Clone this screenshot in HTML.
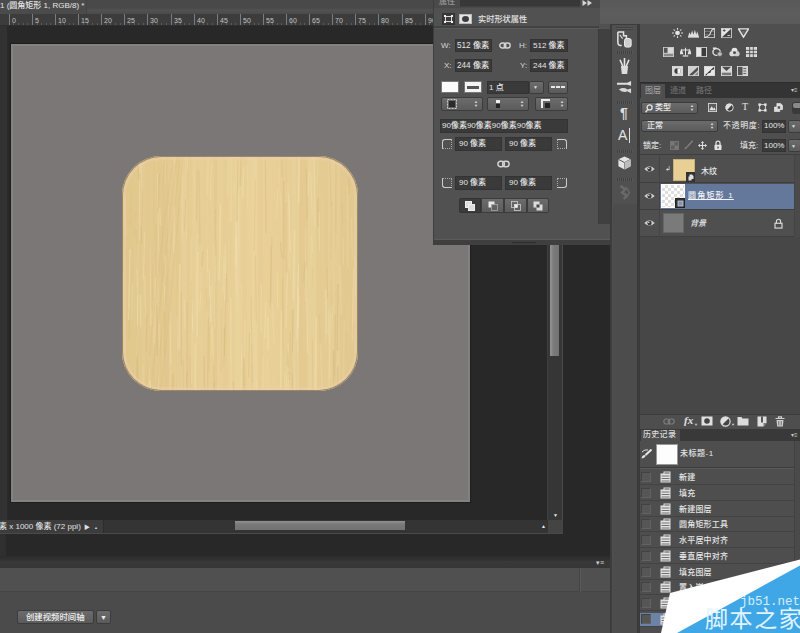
<!DOCTYPE html>
<html lang="zh-CN">
<head>
<meta charset="utf-8">
<title>Photoshop - 圆角矩形</title>
<style>
html,body{margin:0;padding:0;}
body{width:800px;height:633px;overflow:hidden;background:#282828;position:relative;
  font-family:"Liberation Sans","Noto Sans CJK SC",sans-serif;font-size:9px;color:#dcdcdc;line-height:1;font-weight:500;}
.a{position:absolute;box-sizing:border-box;}
.t{position:absolute;white-space:nowrap;}
/* ---------- document window ---------- */
#titlebar{left:0;top:0;width:800px;height:14px;background:linear-gradient(#494949 55%,#515151 75%,#4b4b4b);}
#doctab{left:0;top:0;width:87px;height:14px;background:#4b4b4b;border-right:1px solid #424242;}
#ruler{left:0;top:14px;width:433px;height:12px;background:#3c3c3c;border-bottom:1px solid #2e2e2e;}
#vruler{left:0;top:26px;width:7px;height:494px;background:#323232;}
#canvas{left:11px;top:44px;width:459px;height:458px;background:#7b7777;box-shadow:0 0 0 1px #1e1e1e;border:2px solid #848181;}
#wood{left:122px;top:156px;width:236px;height:235px;border-radius:39px;overflow:hidden;background:#e6cd94;}
#woodedge{left:122px;top:156px;width:236px;height:235px;border-radius:39px;box-shadow:inset 0 0 0 1px rgba(105,88,60,.6),inset 0 0 0 4px rgba(238,208,180,.4);}
#vscroll{left:547px;top:25px;width:16px;height:495px;background:#363636;border-left:1px solid #3e3e3e;border-right:1px solid #4a4a4a;}
#vthumb{left:550px;top:25px;width:9px;height:331px;background:linear-gradient(90deg,#959595,#7a7a7a 40%,#747474);}
#status{left:0;top:520px;width:563px;height:14px;background:#3c3c3c;border-bottom:1px solid #4a4a4a;}
#hthumb{left:235px;top:521px;width:170px;height:9px;background:linear-gradient(#909090,#787878 40%,#727272);}
/* ---------- timeline ---------- */
#tlhead{left:0;top:556px;width:610px;height:12px;background:linear-gradient(#2c2c2c,#323232 35%,#383838 45%,#363636);}
#tl{left:0;top:568px;width:610px;height:65px;background:#4b4b4b;}
#tltop{left:0;top:568px;width:610px;height:24px;background:#505050;border-bottom:1px solid #454545;}
.btn{background:linear-gradient(#6c6c6c,#5b5b5b);border:1px solid #3c3c3c;border-radius:2px;}
/* ---------- right column ---------- */
#rtop{left:600px;top:0;width:200px;height:24px;background:linear-gradient(#595959,#5d5d5d 60%,#5a5a5a);z-index:3;}
#strip{left:610px;top:24px;width:30px;height:609px;background:#505050;border-left:2px solid #3c3c3c;border-right:3px solid #3a3a3a;border-top:1px solid #3c3c3c;}
#layers{left:640px;top:24px;width:160px;height:404px;background:#4f4f4f;}
#history{left:640px;top:428px;width:160px;height:205px;background:#4e4e4e;}
/* ---------- properties ---------- */
#props{left:433px;top:0;width:177px;height:245px;background:#515151;border-left:1px solid #3e3e3e;border-bottom:1px solid #333;}
.fld{background:#3a3a3a;border:1px solid #333;height:11px;}
</style>
</head>
<body>
<!-- document window -->
<div class="a" id="titlebar"></div>
<div class="a" id="doctab"></div>
<div class="t" style="left:0px;top:2px;font-size:8px;color:#e6e6e6;">1 (圆角矩形 1, RGB/8) *</div>
<div class="a" id="ruler"></div>
<div class="a" style="left:9px;top:14px;width:1px;height:11px;background:#7c7c7c;"></div>
<div class="t" style="left:12px;top:17px;font-size:7px;color:#c2c2c2;">0</div>
<div class="a" style="left:13px;top:23px;width:1px;height:2px;background:#5a5a5a;"></div>
<div class="a" style="left:18px;top:23px;width:1px;height:2px;background:#5a5a5a;"></div>
<div class="a" style="left:23px;top:23px;width:1px;height:2px;background:#5a5a5a;"></div>
<div class="a" style="left:27px;top:23px;width:1px;height:2px;background:#5a5a5a;"></div>
<div class="a" style="left:32px;top:14px;width:1px;height:11px;background:#7c7c7c;"></div>
<div class="t" style="left:35px;top:17px;font-size:7px;color:#c2c2c2;">5</div>
<div class="a" style="left:37px;top:23px;width:1px;height:2px;background:#5a5a5a;"></div>
<div class="a" style="left:41px;top:23px;width:1px;height:2px;background:#5a5a5a;"></div>
<div class="a" style="left:46px;top:23px;width:1px;height:2px;background:#5a5a5a;"></div>
<div class="a" style="left:50px;top:23px;width:1px;height:2px;background:#5a5a5a;"></div>
<div class="a" style="left:55px;top:14px;width:1px;height:11px;background:#7c7c7c;"></div>
<div class="t" style="left:58px;top:17px;font-size:7px;color:#c2c2c2;">10</div>
<div class="a" style="left:60px;top:23px;width:1px;height:2px;background:#5a5a5a;"></div>
<div class="a" style="left:64px;top:23px;width:1px;height:2px;background:#5a5a5a;"></div>
<div class="a" style="left:69px;top:23px;width:1px;height:2px;background:#5a5a5a;"></div>
<div class="a" style="left:73px;top:23px;width:1px;height:2px;background:#5a5a5a;"></div>
<div class="a" style="left:78px;top:14px;width:1px;height:11px;background:#7c7c7c;"></div>
<div class="t" style="left:81px;top:17px;font-size:7px;color:#c2c2c2;">15</div>
<div class="a" style="left:83px;top:23px;width:1px;height:2px;background:#5a5a5a;"></div>
<div class="a" style="left:87px;top:23px;width:1px;height:2px;background:#5a5a5a;"></div>
<div class="a" style="left:92px;top:23px;width:1px;height:2px;background:#5a5a5a;"></div>
<div class="a" style="left:97px;top:23px;width:1px;height:2px;background:#5a5a5a;"></div>
<div class="a" style="left:101px;top:14px;width:1px;height:11px;background:#7c7c7c;"></div>
<div class="t" style="left:104px;top:17px;font-size:7px;color:#c2c2c2;">20</div>
<div class="a" style="left:106px;top:23px;width:1px;height:2px;background:#5a5a5a;"></div>
<div class="a" style="left:110px;top:23px;width:1px;height:2px;background:#5a5a5a;"></div>
<div class="a" style="left:115px;top:23px;width:1px;height:2px;background:#5a5a5a;"></div>
<div class="a" style="left:120px;top:23px;width:1px;height:2px;background:#5a5a5a;"></div>
<div class="a" style="left:124px;top:14px;width:1px;height:11px;background:#7c7c7c;"></div>
<div class="t" style="left:127px;top:17px;font-size:7px;color:#c2c2c2;">25</div>
<div class="a" style="left:129px;top:23px;width:1px;height:2px;background:#5a5a5a;"></div>
<div class="a" style="left:134px;top:23px;width:1px;height:2px;background:#5a5a5a;"></div>
<div class="a" style="left:138px;top:23px;width:1px;height:2px;background:#5a5a5a;"></div>
<div class="a" style="left:143px;top:23px;width:1px;height:2px;background:#5a5a5a;"></div>
<div class="a" style="left:147px;top:14px;width:1px;height:11px;background:#7c7c7c;"></div>
<div class="t" style="left:150px;top:17px;font-size:7px;color:#c2c2c2;">30</div>
<div class="a" style="left:152px;top:23px;width:1px;height:2px;background:#5a5a5a;"></div>
<div class="a" style="left:157px;top:23px;width:1px;height:2px;background:#5a5a5a;"></div>
<div class="a" style="left:161px;top:23px;width:1px;height:2px;background:#5a5a5a;"></div>
<div class="a" style="left:166px;top:23px;width:1px;height:2px;background:#5a5a5a;"></div>
<div class="a" style="left:171px;top:14px;width:1px;height:11px;background:#7c7c7c;"></div>
<div class="t" style="left:174px;top:17px;font-size:7px;color:#c2c2c2;">35</div>
<div class="a" style="left:175px;top:23px;width:1px;height:2px;background:#5a5a5a;"></div>
<div class="a" style="left:180px;top:23px;width:1px;height:2px;background:#5a5a5a;"></div>
<div class="a" style="left:184px;top:23px;width:1px;height:2px;background:#5a5a5a;"></div>
<div class="a" style="left:189px;top:23px;width:1px;height:2px;background:#5a5a5a;"></div>
<div class="a" style="left:194px;top:14px;width:1px;height:11px;background:#7c7c7c;"></div>
<div class="t" style="left:197px;top:17px;font-size:7px;color:#c2c2c2;">40</div>
<div class="a" style="left:198px;top:23px;width:1px;height:2px;background:#5a5a5a;"></div>
<div class="a" style="left:203px;top:23px;width:1px;height:2px;background:#5a5a5a;"></div>
<div class="a" style="left:207px;top:23px;width:1px;height:2px;background:#5a5a5a;"></div>
<div class="a" style="left:212px;top:23px;width:1px;height:2px;background:#5a5a5a;"></div>
<div class="a" style="left:217px;top:14px;width:1px;height:11px;background:#7c7c7c;"></div>
<div class="t" style="left:220px;top:17px;font-size:7px;color:#c2c2c2;">45</div>
<div class="a" style="left:221px;top:23px;width:1px;height:2px;background:#5a5a5a;"></div>
<div class="a" style="left:226px;top:23px;width:1px;height:2px;background:#5a5a5a;"></div>
<div class="a" style="left:231px;top:23px;width:1px;height:2px;background:#5a5a5a;"></div>
<div class="a" style="left:235px;top:23px;width:1px;height:2px;background:#5a5a5a;"></div>
<div class="a" style="left:240px;top:14px;width:1px;height:11px;background:#7c7c7c;"></div>
<div class="t" style="left:243px;top:17px;font-size:7px;color:#c2c2c2;">50</div>
<div class="a" style="left:244px;top:23px;width:1px;height:2px;background:#5a5a5a;"></div>
<div class="a" style="left:249px;top:23px;width:1px;height:2px;background:#5a5a5a;"></div>
<div class="a" style="left:254px;top:23px;width:1px;height:2px;background:#5a5a5a;"></div>
<div class="a" style="left:258px;top:23px;width:1px;height:2px;background:#5a5a5a;"></div>
<div class="a" style="left:263px;top:14px;width:1px;height:11px;background:#7c7c7c;"></div>
<div class="t" style="left:266px;top:17px;font-size:7px;color:#c2c2c2;">55</div>
<div class="a" style="left:268px;top:23px;width:1px;height:2px;background:#5a5a5a;"></div>
<div class="a" style="left:272px;top:23px;width:1px;height:2px;background:#5a5a5a;"></div>
<div class="a" style="left:277px;top:23px;width:1px;height:2px;background:#5a5a5a;"></div>
<div class="a" style="left:281px;top:23px;width:1px;height:2px;background:#5a5a5a;"></div>
<div class="a" style="left:286px;top:14px;width:1px;height:11px;background:#7c7c7c;"></div>
<div class="t" style="left:289px;top:17px;font-size:7px;color:#c2c2c2;">60</div>
<div class="a" style="left:291px;top:23px;width:1px;height:2px;background:#5a5a5a;"></div>
<div class="a" style="left:295px;top:23px;width:1px;height:2px;background:#5a5a5a;"></div>
<div class="a" style="left:300px;top:23px;width:1px;height:2px;background:#5a5a5a;"></div>
<div class="a" style="left:304px;top:23px;width:1px;height:2px;background:#5a5a5a;"></div>
<div class="a" style="left:309px;top:14px;width:1px;height:11px;background:#7c7c7c;"></div>
<div class="t" style="left:312px;top:17px;font-size:7px;color:#c2c2c2;">65</div>
<div class="a" style="left:314px;top:23px;width:1px;height:2px;background:#5a5a5a;"></div>
<div class="a" style="left:318px;top:23px;width:1px;height:2px;background:#5a5a5a;"></div>
<div class="a" style="left:323px;top:23px;width:1px;height:2px;background:#5a5a5a;"></div>
<div class="a" style="left:328px;top:23px;width:1px;height:2px;background:#5a5a5a;"></div>
<div class="a" style="left:332px;top:14px;width:1px;height:11px;background:#7c7c7c;"></div>
<div class="t" style="left:335px;top:17px;font-size:7px;color:#c2c2c2;">70</div>
<div class="a" style="left:337px;top:23px;width:1px;height:2px;background:#5a5a5a;"></div>
<div class="a" style="left:341px;top:23px;width:1px;height:2px;background:#5a5a5a;"></div>
<div class="a" style="left:346px;top:23px;width:1px;height:2px;background:#5a5a5a;"></div>
<div class="a" style="left:351px;top:23px;width:1px;height:2px;background:#5a5a5a;"></div>
<div class="a" style="left:355px;top:14px;width:1px;height:11px;background:#7c7c7c;"></div>
<div class="t" style="left:358px;top:17px;font-size:7px;color:#c2c2c2;">75</div>
<div class="a" style="left:360px;top:23px;width:1px;height:2px;background:#5a5a5a;"></div>
<div class="a" style="left:365px;top:23px;width:1px;height:2px;background:#5a5a5a;"></div>
<div class="a" style="left:369px;top:23px;width:1px;height:2px;background:#5a5a5a;"></div>
<div class="a" style="left:374px;top:23px;width:1px;height:2px;background:#5a5a5a;"></div>
<div class="a" style="left:378px;top:14px;width:1px;height:11px;background:#7c7c7c;"></div>
<div class="t" style="left:381px;top:17px;font-size:7px;color:#c2c2c2;">80</div>
<div class="a" style="left:383px;top:23px;width:1px;height:2px;background:#5a5a5a;"></div>
<div class="a" style="left:388px;top:23px;width:1px;height:2px;background:#5a5a5a;"></div>
<div class="a" style="left:392px;top:23px;width:1px;height:2px;background:#5a5a5a;"></div>
<div class="a" style="left:397px;top:23px;width:1px;height:2px;background:#5a5a5a;"></div>
<div class="a" style="left:402px;top:14px;width:1px;height:11px;background:#7c7c7c;"></div>
<div class="t" style="left:405px;top:17px;font-size:7px;color:#c2c2c2;">85</div>
<div class="a" style="left:406px;top:23px;width:1px;height:2px;background:#5a5a5a;"></div>
<div class="a" style="left:411px;top:23px;width:1px;height:2px;background:#5a5a5a;"></div>
<div class="a" style="left:415px;top:23px;width:1px;height:2px;background:#5a5a5a;"></div>
<div class="a" style="left:420px;top:23px;width:1px;height:2px;background:#5a5a5a;"></div>
<div class="a" style="left:425px;top:14px;width:1px;height:11px;background:#7c7c7c;"></div>
<div class="t" style="left:428px;top:17px;font-size:7px;color:#c2c2c2;">90</div>
<div class="a" style="left:429px;top:23px;width:1px;height:2px;background:#5a5a5a;"></div>
<div class="a" id="vruler"></div>
<div class="a" id="canvas"></div>
<div class="a" id="wood"><svg class="a" style="left:0;top:0" width="237" height="235" viewBox="0 0 237 235"><defs><linearGradient id="wg" x1="0" x2="1" y1="0" y2="0"><stop offset="0" stop-color="#e0c78c"/><stop offset="0.3" stop-color="#e6cd94"/><stop offset="0.55" stop-color="#e9d199"/><stop offset="0.8" stop-color="#e5cc93"/><stop offset="1" stop-color="#e1c88e"/></linearGradient></defs><rect width="237" height="235" fill="url(#wg)"/><rect x="20" y="0" width="3" height="235" fill="#f4e3b6" fill-opacity="0.1"/><rect x="31" y="0" width="2" height="235" fill="#d9bd80" fill-opacity="0.15"/><rect x="36" y="0" width="4" height="235" fill="#d9bd80" fill-opacity="0.14"/><rect x="42" y="0" width="5" height="235" fill="#d9bd80" fill-opacity="0.13"/><rect x="54" y="0" width="4" height="235" fill="#d9bd80" fill-opacity="0.14"/><rect x="60" y="0" width="5" height="235" fill="#f4e3b6" fill-opacity="0.13"/><rect x="65" y="0" width="2" height="235" fill="#d9bd80" fill-opacity="0.14"/><rect x="70" y="0" width="5" height="235" fill="#f4e3b6" fill-opacity="0.1"/><rect x="77" y="0" width="4" height="235" fill="#f4e3b6" fill-opacity="0.08"/><rect x="84" y="0" width="2" height="235" fill="#f4e3b6" fill-opacity="0.09"/><rect x="92" y="0" width="3" height="235" fill="#d9bd80" fill-opacity="0.2"/><rect x="101" y="0" width="5" height="235" fill="#d9bd80" fill-opacity="0.08"/><rect x="108" y="0" width="2" height="235" fill="#f4e3b6" fill-opacity="0.2"/><rect x="113" y="0" width="5" height="235" fill="#f4e3b6" fill-opacity="0.12"/><rect x="120" y="0" width="5" height="235" fill="#d9bd80" fill-opacity="0.11"/><rect x="130" y="0" width="5" height="235" fill="#f4e3b6" fill-opacity="0.14"/><rect x="136" y="0" width="5" height="235" fill="#d9bd80" fill-opacity="0.12"/><rect x="160" y="0" width="2" height="235" fill="#d9bd80" fill-opacity="0.14"/><rect x="170" y="0" width="4" height="235" fill="#f4e3b6" fill-opacity="0.14"/><rect x="175" y="0" width="2" height="235" fill="#f4e3b6" fill-opacity="0.15"/><rect x="177" y="0" width="4" height="235" fill="#d9bd80" fill-opacity="0.17"/><rect x="181" y="0" width="4" height="235" fill="#d9bd80" fill-opacity="0.09"/><rect x="186" y="0" width="4" height="235" fill="#f4e3b6" fill-opacity="0.2"/><rect x="190" y="0" width="4" height="235" fill="#f4e3b6" fill-opacity="0.2"/><rect x="206" y="0" width="5" height="235" fill="#f4e3b6" fill-opacity="0.12"/><rect x="211" y="0" width="2" height="235" fill="#f4e3b6" fill-opacity="0.17"/><rect x="214" y="0" width="4" height="235" fill="#f4e3b6" fill-opacity="0.14"/><rect x="236" y="0" width="2" height="235" fill="#d9bd80" fill-opacity="0.2"/><path d="M172.6 75l-1.2 70" stroke="#f8e9c0" stroke-opacity="0.36" stroke-width="1.5"/><path d="M177.8 -13l-1.2 60" stroke="#f8e9c0" stroke-opacity="0.39" stroke-width="1.5"/><path d="M184.8 142l0.3 51" stroke="#f8e9c0" stroke-opacity="0.19" stroke-width="0.8"/><path d="M122.9 165l-0.3 41" stroke="#f8e9c0" stroke-opacity="0.21" stroke-width="1.5"/><path d="M59.4 135l0.2 75" stroke="#cfb071" stroke-opacity="0.25" stroke-width="1"/><path d="M75.0 13l-0.7 52" stroke="#cfb071" stroke-opacity="0.39" stroke-width="0.8"/><path d="M40.1 90l0.1 36" stroke="#cfb071" stroke-opacity="0.25" stroke-width="1"/><path d="M159.3 155l-0.7 78" stroke="#f8e9c0" stroke-opacity="0.36" stroke-width="1.5"/><path d="M144.0 146l-1.4 36" stroke="#f8e9c0" stroke-opacity="0.35" stroke-width="1"/><path d="M32.2 91l-1.4 17" stroke="#f8e9c0" stroke-opacity="0.19" stroke-width="1"/><path d="M149.1 89l-0.9 62" stroke="#cfb071" stroke-opacity="0.32" stroke-width="1"/><path d="M112.6 24l-0.8 16" stroke="#f8e9c0" stroke-opacity="0.16" stroke-width="1.5"/><path d="M184.5 112l1.2 86" stroke="#f8e9c0" stroke-opacity="0.35" stroke-width="1"/><path d="M20.7 208l1.2 69" stroke="#f8e9c0" stroke-opacity="0.2" stroke-width="1"/><path d="M1.6 115l-0.9 64" stroke="#f8e9c0" stroke-opacity="0.31" stroke-width="1"/><path d="M171.1 180l1.4 63" stroke="#f8e9c0" stroke-opacity="0.37" stroke-width="0.8"/><path d="M231.6 112l-1.5 74" stroke="#f8e9c0" stroke-opacity="0.33" stroke-width="1"/><path d="M119.6 -11l-1.4 41" stroke="#cfb071" stroke-opacity="0.27" stroke-width="1.5"/><path d="M191.8 -4l1.2 75" stroke="#f8e9c0" stroke-opacity="0.32" stroke-width="1"/><path d="M111.5 225l1.3 83" stroke="#cfb071" stroke-opacity="0.27" stroke-width="1.5"/><path d="M20.4 34l-1.0 54" stroke="#cfb071" stroke-opacity="0.29" stroke-width="1"/><path d="M121.9 202l0.3 34" stroke="#cfb071" stroke-opacity="0.37" stroke-width="1.5"/><path d="M72.2 15l0.1 56" stroke="#f8e9c0" stroke-opacity="0.2" stroke-width="1"/><path d="M119.3 128l0.9 17" stroke="#f8e9c0" stroke-opacity="0.25" stroke-width="0.8"/><path d="M133.4 100l1.3 67" stroke="#cfb071" stroke-opacity="0.26" stroke-width="0.8"/><path d="M189.7 79l0.9 33" stroke="#f8e9c0" stroke-opacity="0.26" stroke-width="1.5"/><path d="M213.4 97l-0.7 39" stroke="#f8e9c0" stroke-opacity="0.16" stroke-width="1"/><path d="M166.4 219l-0.5 18" stroke="#f8e9c0" stroke-opacity="0.32" stroke-width="1"/><path d="M84.2 132l0.7 23" stroke="#cfb071" stroke-opacity="0.31" stroke-width="0.8"/><path d="M166.2 195l0.1 17" stroke="#cfb071" stroke-opacity="0.3" stroke-width="1.5"/><path d="M204.7 111l1.1 31" stroke="#cfb071" stroke-opacity="0.3" stroke-width="1"/><path d="M55.1 161l1.3 76" stroke="#f8e9c0" stroke-opacity="0.23" stroke-width="1"/><path d="M51.7 225l-1.2 82" stroke="#cfb071" stroke-opacity="0.18" stroke-width="1"/><path d="M91.9 87l0.9 86" stroke="#f8e9c0" stroke-opacity="0.31" stroke-width="1"/><path d="M22.8 120l0.8 42" stroke="#f8e9c0" stroke-opacity="0.28" stroke-width="1"/><path d="M119.2 148l0.8 29" stroke="#f8e9c0" stroke-opacity="0.16" stroke-width="0.8"/><path d="M145.4 202l1.0 51" stroke="#f8e9c0" stroke-opacity="0.2" stroke-width="1"/><path d="M234.7 207l-1.3 22" stroke="#f8e9c0" stroke-opacity="0.32" stroke-width="0.8"/><path d="M22.9 76l-1.5 47" stroke="#f8e9c0" stroke-opacity="0.3" stroke-width="1"/><path d="M166.1 187l1.3 29" stroke="#f8e9c0" stroke-opacity="0.24" stroke-width="1.5"/><path d="M143.4 3l0.6 74" stroke="#cfb071" stroke-opacity="0.35" stroke-width="1"/><path d="M204.0 134l0.9 45" stroke="#f8e9c0" stroke-opacity="0.4" stroke-width="1"/><path d="M61.2 203l1.2 71" stroke="#cfb071" stroke-opacity="0.25" stroke-width="1"/><path d="M208.5 150l-1.3 73" stroke="#f8e9c0" stroke-opacity="0.33" stroke-width="1"/><path d="M81.0 95l-1.4 16" stroke="#cfb071" stroke-opacity="0.38" stroke-width="1"/><path d="M64.7 216l0.1 37" stroke="#cfb071" stroke-opacity="0.29" stroke-width="1"/><path d="M92.3 225l-1.4 63" stroke="#cfb071" stroke-opacity="0.4" stroke-width="0.8"/><path d="M145.8 161l0.4 34" stroke="#f8e9c0" stroke-opacity="0.34" stroke-width="1.5"/><path d="M2.6 43l1.4 36" stroke="#f8e9c0" stroke-opacity="0.28" stroke-width="1"/><path d="M134.6 224l1.4 63" stroke="#f8e9c0" stroke-opacity="0.32" stroke-width="0.8"/><path d="M91.6 210l0.3 44" stroke="#cfb071" stroke-opacity="0.29" stroke-width="1"/><path d="M101.8 101l-0.6 36" stroke="#f8e9c0" stroke-opacity="0.24" stroke-width="1.5"/><path d="M155.3 117l0.3 36" stroke="#f8e9c0" stroke-opacity="0.34" stroke-width="1"/><path d="M150.0 80l-1.3 66" stroke="#cfb071" stroke-opacity="0.34" stroke-width="0.8"/><path d="M234.3 211l1.4 21" stroke="#f8e9c0" stroke-opacity="0.27" stroke-width="1"/><path d="M57.8 108l-0.8 85" stroke="#f8e9c0" stroke-opacity="0.39" stroke-width="1.5"/><path d="M167.4 -8l0.1 46" stroke="#f8e9c0" stroke-opacity="0.16" stroke-width="0.8"/><path d="M29.5 89l0.5 65" stroke="#cfb071" stroke-opacity="0.31" stroke-width="1.5"/><path d="M86.3 162l-0.8 76" stroke="#cfb071" stroke-opacity="0.33" stroke-width="1"/><path d="M27.0 199l0.7 74" stroke="#f8e9c0" stroke-opacity="0.3" stroke-width="1"/><path d="M165.7 27l1.4 36" stroke="#f8e9c0" stroke-opacity="0.21" stroke-width="1"/><path d="M217.0 195l-1.4 18" stroke="#f8e9c0" stroke-opacity="0.21" stroke-width="0.8"/><path d="M9.0 35l-0.8 36" stroke="#cfb071" stroke-opacity="0.19" stroke-width="0.8"/><path d="M232.6 99l1.0 42" stroke="#f8e9c0" stroke-opacity="0.34" stroke-width="1"/><path d="M17.6 9l-0.3 76" stroke="#f8e9c0" stroke-opacity="0.34" stroke-width="1"/><path d="M35.7 18l1.0 78" stroke="#f8e9c0" stroke-opacity="0.34" stroke-width="1"/><path d="M43.6 140l-1.3 59" stroke="#cfb071" stroke-opacity="0.17" stroke-width="1.5"/><path d="M133.7 99l-0.6 66" stroke="#cfb071" stroke-opacity="0.15" stroke-width="1"/><path d="M215.8 128l-0.7 67" stroke="#cfb071" stroke-opacity="0.32" stroke-width="1.5"/><path d="M33.9 68l-0.2 69" stroke="#cfb071" stroke-opacity="0.23" stroke-width="1"/><path d="M141.0 201l-0.6 67" stroke="#f8e9c0" stroke-opacity="0.35" stroke-width="1"/><path d="M75.3 78l-1.4 85" stroke="#f8e9c0" stroke-opacity="0.36" stroke-width="1"/><path d="M160.5 123l1.0 75" stroke="#cfb071" stroke-opacity="0.29" stroke-width="1"/><path d="M133.4 23l-1.3 72" stroke="#cfb071" stroke-opacity="0.21" stroke-width="1"/><path d="M37.6 52l0.9 17" stroke="#f8e9c0" stroke-opacity="0.29" stroke-width="1.5"/><path d="M19.9 0l-1.1 70" stroke="#f8e9c0" stroke-opacity="0.31" stroke-width="1"/><path d="M176.8 139l-0.5 33" stroke="#f8e9c0" stroke-opacity="0.38" stroke-width="1"/><path d="M108.8 66l0.1 76" stroke="#cfb071" stroke-opacity="0.27" stroke-width="1"/><path d="M170.9 153l-0.5 84" stroke="#cfb071" stroke-opacity="0.4" stroke-width="1.5"/><path d="M0.9 73l0.1 22" stroke="#cfb071" stroke-opacity="0.31" stroke-width="1.5"/><path d="M168.3 177l-1.0 47" stroke="#cfb071" stroke-opacity="0.21" stroke-width="1.5"/><path d="M150.5 148l1.4 39" stroke="#f8e9c0" stroke-opacity="0.22" stroke-width="1.5"/><path d="M14.0 56l-1.3 24" stroke="#cfb071" stroke-opacity="0.19" stroke-width="1"/><path d="M108.7 123l-0.4 83" stroke="#f8e9c0" stroke-opacity="0.2" stroke-width="0.8"/><path d="M139.4 127l-0.3 50" stroke="#f8e9c0" stroke-opacity="0.37" stroke-width="1"/><path d="M215.8 210l-0.3 62" stroke="#cfb071" stroke-opacity="0.27" stroke-width="1.5"/><path d="M226.5 142l-1.4 73" stroke="#f8e9c0" stroke-opacity="0.21" stroke-width="0.8"/><path d="M224.6 176l1.3 44" stroke="#cfb071" stroke-opacity="0.16" stroke-width="1"/><path d="M211.5 194l0.3 83" stroke="#cfb071" stroke-opacity="0.33" stroke-width="1.5"/><path d="M37.3 18l-1.1 39" stroke="#cfb071" stroke-opacity="0.35" stroke-width="1"/><path d="M175.8 132l-1.5 54" stroke="#f8e9c0" stroke-opacity="0.34" stroke-width="0.8"/><path d="M194.7 187l0.1 77" stroke="#f8e9c0" stroke-opacity="0.3" stroke-width="0.8"/><path d="M210.8 150l-0.9 21" stroke="#f8e9c0" stroke-opacity="0.2" stroke-width="1"/><path d="M161.7 171l-1.0 48" stroke="#f8e9c0" stroke-opacity="0.28" stroke-width="0.8"/><path d="M197.2 56l0.5 38" stroke="#f8e9c0" stroke-opacity="0.4" stroke-width="0.8"/><path d="M15.9 -2l0.9 26" stroke="#cfb071" stroke-opacity="0.34" stroke-width="1.5"/><path d="M28.9 89l-0.1 80" stroke="#f8e9c0" stroke-opacity="0.29" stroke-width="1.5"/><path d="M2.5 223l0.4 75" stroke="#cfb071" stroke-opacity="0.19" stroke-width="1"/><path d="M222.2 164l-0.9 87" stroke="#f8e9c0" stroke-opacity="0.17" stroke-width="1.5"/><path d="M89.2 7l-0.5 38" stroke="#f8e9c0" stroke-opacity="0.33" stroke-width="1"/><path d="M196.0 3l-1.0 26" stroke="#f8e9c0" stroke-opacity="0.31" stroke-width="0.8"/><path d="M45.8 -11l1.5 50" stroke="#f8e9c0" stroke-opacity="0.16" stroke-width="0.8"/><path d="M102.8 169l-0.9 41" stroke="#cfb071" stroke-opacity="0.18" stroke-width="1.5"/><path d="M35.1 149l0.3 51" stroke="#cfb071" stroke-opacity="0.33" stroke-width="1.5"/><path d="M75.3 173l-0.6 33" stroke="#f8e9c0" stroke-opacity="0.2" stroke-width="0.8"/><path d="M104.6 117l0.3 30" stroke="#cfb071" stroke-opacity="0.36" stroke-width="1"/><path d="M37.5 168l-1.1 83" stroke="#f8e9c0" stroke-opacity="0.28" stroke-width="1"/><path d="M169.1 222l0.5 54" stroke="#f8e9c0" stroke-opacity="0.16" stroke-width="1"/><path d="M184.1 13l1.3 51" stroke="#cfb071" stroke-opacity="0.23" stroke-width="1.5"/><path d="M85.6 93l0.1 24" stroke="#f8e9c0" stroke-opacity="0.29" stroke-width="1"/><path d="M15.1 204l1.0 28" stroke="#cfb071" stroke-opacity="0.18" stroke-width="1"/><path d="M68.4 200l0.1 33" stroke="#cfb071" stroke-opacity="0.2" stroke-width="1"/><path d="M18.1 -12l0.7 29" stroke="#f8e9c0" stroke-opacity="0.32" stroke-width="1"/><path d="M90.4 125l-1.4 75" stroke="#f8e9c0" stroke-opacity="0.25" stroke-width="0.8"/><path d="M125.1 9l0.2 45" stroke="#f8e9c0" stroke-opacity="0.22" stroke-width="1"/><path d="M78.7 137l-1.2 18" stroke="#f8e9c0" stroke-opacity="0.27" stroke-width="1"/><path d="M81.9 200l1.5 83" stroke="#cfb071" stroke-opacity="0.27" stroke-width="1.5"/><path d="M198.7 189l1.3 46" stroke="#f8e9c0" stroke-opacity="0.18" stroke-width="1.5"/><path d="M78.3 108l0.7 47" stroke="#f8e9c0" stroke-opacity="0.16" stroke-width="0.8"/><path d="M213.3 159l-0.8 60" stroke="#cfb071" stroke-opacity="0.37" stroke-width="1"/><path d="M200.1 39l1.2 80" stroke="#f8e9c0" stroke-opacity="0.18" stroke-width="0.8"/><path d="M129.2 141l1.1 86" stroke="#cfb071" stroke-opacity="0.33" stroke-width="0.8"/><path d="M87.4 114l0.2 57" stroke="#f8e9c0" stroke-opacity="0.34" stroke-width="1"/><path d="M214.1 4l-0.1 74" stroke="#cfb071" stroke-opacity="0.29" stroke-width="0.8"/><path d="M70.2 158l0.9 17" stroke="#f8e9c0" stroke-opacity="0.37" stroke-width="1"/><path d="M94.1 67l-0.6 59" stroke="#f8e9c0" stroke-opacity="0.26" stroke-width="0.8"/><path d="M76.9 15l1.1 73" stroke="#cfb071" stroke-opacity="0.2" stroke-width="1.5"/><path d="M164.1 -6l0.4 39" stroke="#cfb071" stroke-opacity="0.15" stroke-width="1"/><path d="M165.4 117l-1.3 55" stroke="#f8e9c0" stroke-opacity="0.37" stroke-width="1"/><path d="M25.1 158l-1.1 38" stroke="#cfb071" stroke-opacity="0.33" stroke-width="1"/><path d="M164.9 210l-1.1 48" stroke="#f8e9c0" stroke-opacity="0.37" stroke-width="0.8"/><path d="M163.8 46l0.5 69" stroke="#cfb071" stroke-opacity="0.24" stroke-width="1"/><path d="M209.6 125l-0.8 32" stroke="#cfb071" stroke-opacity="0.2" stroke-width="1"/><path d="M31.4 144l0.1 50" stroke="#f8e9c0" stroke-opacity="0.28" stroke-width="0.8"/><path d="M10.7 127l-1.0 36" stroke="#f8e9c0" stroke-opacity="0.29" stroke-width="1"/><path d="M234.2 26l1.5 28" stroke="#f8e9c0" stroke-opacity="0.37" stroke-width="0.8"/><path d="M8.0 93l-1.3 71" stroke="#f8e9c0" stroke-opacity="0.37" stroke-width="1.5"/><path d="M15.2 170l0.1 83" stroke="#cfb071" stroke-opacity="0.35" stroke-width="1"/><path d="M119.8 187l-1.2 66" stroke="#f8e9c0" stroke-opacity="0.34" stroke-width="1"/><path d="M103.2 144l-0.8 56" stroke="#cfb071" stroke-opacity="0.35" stroke-width="1"/><path d="M115.9 34l1.4 59" stroke="#f8e9c0" stroke-opacity="0.2" stroke-width="1.5"/><path d="M12.4 90l-0.0 81" stroke="#f8e9c0" stroke-opacity="0.15" stroke-width="1"/><path d="M103.0 88l0.2 35" stroke="#f8e9c0" stroke-opacity="0.38" stroke-width="0.8"/><path d="M128.7 174l0.6 33" stroke="#f8e9c0" stroke-opacity="0.26" stroke-width="1"/><path d="M194.3 161l-1.0 74" stroke="#f8e9c0" stroke-opacity="0.36" stroke-width="1.5"/><path d="M60.4 19l-0.4 67" stroke="#f8e9c0" stroke-opacity="0.25" stroke-width="1.5"/><path d="M51.3 218l-1.1 18" stroke="#cfb071" stroke-opacity="0.3" stroke-width="1.5"/><path d="M176.5 108l-1.1 89" stroke="#f8e9c0" stroke-opacity="0.37" stroke-width="0.8"/><path d="M93.1 53l0.7 47" stroke="#cfb071" stroke-opacity="0.32" stroke-width="0.8"/><path d="M231.3 130l-0.1 37" stroke="#f8e9c0" stroke-opacity="0.21" stroke-width="0.8"/><path d="M221.0 69l0.4 40" stroke="#f8e9c0" stroke-opacity="0.25" stroke-width="1"/><path d="M13.9 64l1.0 67" stroke="#f8e9c0" stroke-opacity="0.25" stroke-width="1"/><path d="M90.3 171l0.9 31" stroke="#f8e9c0" stroke-opacity="0.35" stroke-width="1"/><path d="M113.8 78l0.4 60" stroke="#f8e9c0" stroke-opacity="0.27" stroke-width="1"/><path d="M43.0 99l-0.4 56" stroke="#f8e9c0" stroke-opacity="0.32" stroke-width="1.5"/><path d="M65.1 -15l0.4 29" stroke="#f8e9c0" stroke-opacity="0.29" stroke-width="1"/><path d="M51.6 5l1.0 19" stroke="#f8e9c0" stroke-opacity="0.21" stroke-width="1"/><path d="M28.3 225l-0.5 78" stroke="#f8e9c0" stroke-opacity="0.37" stroke-width="1.5"/><path d="M182.7 107l-0.9 19" stroke="#cfb071" stroke-opacity="0.27" stroke-width="1.5"/><path d="M121.8 11l-1.1 31" stroke="#f8e9c0" stroke-opacity="0.29" stroke-width="1.5"/><path d="M167.5 44l-0.7 69" stroke="#f8e9c0" stroke-opacity="0.2" stroke-width="1.5"/><path d="M168.9 79l-0.5 44" stroke="#f8e9c0" stroke-opacity="0.22" stroke-width="1"/><path d="M51.1 -10l1.4 17" stroke="#f8e9c0" stroke-opacity="0.35" stroke-width="1.5"/><path d="M70.6 144l-1.1 84" stroke="#f8e9c0" stroke-opacity="0.24" stroke-width="1"/><path d="M183.6 72l-0.3 74" stroke="#f8e9c0" stroke-opacity="0.26" stroke-width="1"/><path d="M14.2 74l1.3 40" stroke="#cfb071" stroke-opacity="0.21" stroke-width="1.5"/><path d="M47.9 168l1.2 41" stroke="#f8e9c0" stroke-opacity="0.34" stroke-width="1"/><path d="M190.6 97l-0.3 34" stroke="#cfb071" stroke-opacity="0.16" stroke-width="1"/><path d="M86.3 -5l-0.6 45" stroke="#f8e9c0" stroke-opacity="0.36" stroke-width="0.8"/><path d="M170.4 197l0.2 20" stroke="#f8e9c0" stroke-opacity="0.37" stroke-width="0.8"/><path d="M62.1 144l1.2 29" stroke="#f8e9c0" stroke-opacity="0.24" stroke-width="1.5"/><path d="M7.4 153l-0.3 31" stroke="#cfb071" stroke-opacity="0.31" stroke-width="0.8"/><path d="M98.5 48l-1.4 77" stroke="#f8e9c0" stroke-opacity="0.38" stroke-width="1.5"/><path d="M32.2 104l0.3 38" stroke="#f8e9c0" stroke-opacity="0.16" stroke-width="1"/><path d="M63.9 43l-1.5 32" stroke="#cfb071" stroke-opacity="0.39" stroke-width="0.8"/><path d="M129.6 188l1.0 72" stroke="#cfb071" stroke-opacity="0.29" stroke-width="0.8"/><path d="M229.6 62l0.6 41" stroke="#f8e9c0" stroke-opacity="0.33" stroke-width="0.8"/><path d="M162.7 216l0.9 77" stroke="#f8e9c0" stroke-opacity="0.32" stroke-width="1"/><path d="M69.6 82l-0.5 43" stroke="#f8e9c0" stroke-opacity="0.21" stroke-width="1.5"/><path d="M42.1 106l1.2 24" stroke="#cfb071" stroke-opacity="0.35" stroke-width="0.8"/><path d="M73.5 188l-0.3 53" stroke="#f8e9c0" stroke-opacity="0.31" stroke-width="1.5"/><path d="M114.2 64l-0.4 45" stroke="#f8e9c0" stroke-opacity="0.31" stroke-width="1.5"/><path d="M161.8 25l0.2 79" stroke="#cfb071" stroke-opacity="0.36" stroke-width="1"/><path d="M99.7 153l-0.4 62" stroke="#cfb071" stroke-opacity="0.18" stroke-width="1"/><path d="M158.6 37l0.9 29" stroke="#f8e9c0" stroke-opacity="0.32" stroke-width="0.8"/><path d="M219.8 46l1.3 35" stroke="#cfb071" stroke-opacity="0.25" stroke-width="1"/><path d="M234.3 -8l-0.4 68" stroke="#cfb071" stroke-opacity="0.2" stroke-width="0.8"/><path d="M127.6 176l-1.0 45" stroke="#cfb071" stroke-opacity="0.36" stroke-width="0.8"/><path d="M16.0 88l-0.3 80" stroke="#f8e9c0" stroke-opacity="0.33" stroke-width="1"/><path d="M33.7 121l-1.1 66" stroke="#f8e9c0" stroke-opacity="0.35" stroke-width="1"/><path d="M41.5 6l-1.0 85" stroke="#cfb071" stroke-opacity="0.26" stroke-width="1"/><path d="M209.6 46l-0.8 58" stroke="#cfb071" stroke-opacity="0.22" stroke-width="1"/><path d="M114.3 70l0.8 34" stroke="#f8e9c0" stroke-opacity="0.15" stroke-width="0.8"/><path d="M158.9 -19l1.1 40" stroke="#cfb071" stroke-opacity="0.2" stroke-width="1"/><path d="M114.8 82l0.4 76" stroke="#f8e9c0" stroke-opacity="0.2" stroke-width="1.5"/><path d="M196.0 42l-0.2 29" stroke="#cfb071" stroke-opacity="0.4" stroke-width="1"/><path d="M197.6 158l0.5 28" stroke="#cfb071" stroke-opacity="0.28" stroke-width="0.8"/><path d="M64.2 -14l-0.9 57" stroke="#f8e9c0" stroke-opacity="0.15" stroke-width="0.8"/><path d="M227.3 -17l-0.3 55" stroke="#cfb071" stroke-opacity="0.33" stroke-width="1"/><path d="M190.3 183l1.0 73" stroke="#cfb071" stroke-opacity="0.27" stroke-width="0.8"/><path d="M96.8 200l-0.3 62" stroke="#f8e9c0" stroke-opacity="0.21" stroke-width="0.8"/><path d="M87.5 141l-0.6 76" stroke="#cfb071" stroke-opacity="0.26" stroke-width="1"/><path d="M15.8 140l-0.9 60" stroke="#f8e9c0" stroke-opacity="0.34" stroke-width="1"/><path d="M176.1 114l-0.4 66" stroke="#f8e9c0" stroke-opacity="0.19" stroke-width="1"/><path d="M43.2 -15l0.1 45" stroke="#f8e9c0" stroke-opacity="0.23" stroke-width="0.8"/><path d="M225.7 30l0.2 81" stroke="#f8e9c0" stroke-opacity="0.3" stroke-width="1"/><path d="M76.2 96l-1.0 85" stroke="#f8e9c0" stroke-opacity="0.33" stroke-width="1.5"/><path d="M64.8 146l0.1 86" stroke="#cfb071" stroke-opacity="0.34" stroke-width="1"/><path d="M2.4 159l1.2 65" stroke="#f8e9c0" stroke-opacity="0.3" stroke-width="0.8"/><path d="M203.0 134l0.7 53" stroke="#f8e9c0" stroke-opacity="0.33" stroke-width="0.8"/><path d="M103.4 94l-1.4 78" stroke="#f8e9c0" stroke-opacity="0.29" stroke-width="1"/><path d="M218.0 109l1.3 49" stroke="#f8e9c0" stroke-opacity="0.3" stroke-width="1"/><path d="M36.0 95l0.2 89" stroke="#f8e9c0" stroke-opacity="0.27" stroke-width="1"/><path d="M12.4 217l1.3 71" stroke="#f8e9c0" stroke-opacity="0.2" stroke-width="1.5"/><path d="M187.2 15l-1.3 24" stroke="#f8e9c0" stroke-opacity="0.4" stroke-width="0.8"/><path d="M206.2 154l1.1 34" stroke="#f8e9c0" stroke-opacity="0.28" stroke-width="1"/><path d="M46.4 49l0.8 63" stroke="#f8e9c0" stroke-opacity="0.26" stroke-width="0.8"/><path d="M207.8 -2l1.2 52" stroke="#cfb071" stroke-opacity="0.29" stroke-width="0.8"/><path d="M188.8 17l1.4 42" stroke="#f8e9c0" stroke-opacity="0.38" stroke-width="0.8"/><path d="M52.0 51l-0.1 46" stroke="#f8e9c0" stroke-opacity="0.32" stroke-width="1.5"/><path d="M115.9 2l-0.9 64" stroke="#cfb071" stroke-opacity="0.33" stroke-width="1"/><path d="M158.4 86l1.3 16" stroke="#cfb071" stroke-opacity="0.36" stroke-width="1"/><path d="M156.0 31l-1.4 31" stroke="#f8e9c0" stroke-opacity="0.3" stroke-width="1"/><path d="M65.9 43l-1.3 41" stroke="#f8e9c0" stroke-opacity="0.15" stroke-width="1"/><path d="M48.7 156l-0.7 80" stroke="#f8e9c0" stroke-opacity="0.17" stroke-width="1.5"/><path d="M88.8 130l-0.5 36" stroke="#f8e9c0" stroke-opacity="0.39" stroke-width="1"/><path d="M166.8 38l1.4 58" stroke="#f8e9c0" stroke-opacity="0.37" stroke-width="1"/><path d="M18.5 139l0.3 32" stroke="#f8e9c0" stroke-opacity="0.34" stroke-width="1.5"/><path d="M106.3 -4l-0.7 46" stroke="#f8e9c0" stroke-opacity="0.31" stroke-width="1"/><path d="M156.8 -17l1.2 61" stroke="#f8e9c0" stroke-opacity="0.18" stroke-width="0.8"/><path d="M24 235Q40 70 52 0" stroke="#d2b578" stroke-opacity="0.2" stroke-width="1.2" fill="none"/><path d="M29 235Q44 86 55 0" stroke="#d2b578" stroke-opacity="0.2" stroke-width="1.2" fill="none"/><path d="M34 235Q48 102 58 0" stroke="#d2b578" stroke-opacity="0.2" stroke-width="1.2" fill="none"/><path d="M39 235Q52 118 61 0" stroke="#d2b578" stroke-opacity="0.2" stroke-width="1.2" fill="none"/></svg></div>
<div class="a" id="woodedge"></div>
<div class="a" id="vscroll"></div>
<div class="a" id="vthumb"></div>
<div class="a" id="status"></div>
<div class="a" style="left:103px;top:520px;width:445px;height:13px;background:#343434;border-left:1px solid #2c2c2c;"></div>
<div class="a" style="left:0;top:534px;width:6px;height:22px;background:#2f2f2f;"></div>
<div class="a" id="hthumb"></div>
<div class="t" style="left:-1px;top:523px;font-size:8px;color:#e0e0e0;">素 x 1000 像素 (72 ppi)</div>
<div class="t" style="left:84px;top:524px;font-size:6px;color:#e0e0e0;">▶</div>
<div class="t" style="left:94px;top:526px;font-size:4px;color:#cfcfcf;">▲</div>
<!-- timeline -->
<div class="a" id="tlhead"></div>
<div class="a" id="tl"></div>
<div class="a" id="tltop"></div>
<div class="a" style="left:548px;top:520px;width:15px;height:13px;background:#444;"></div>
<div class="t" style="left:553px;top:513px;font-size:5px;color:#e8e8e8;">▼</div>
<div class="t" style="left:541px;top:524px;font-size:5px;color:#e8e8e8;">▲</div>
<div class="a" style="left:579px;top:568px;width:1px;height:24px;background:#444;border-right:1px solid #5a5a5a;box-sizing:content-box;"></div>
<div class="t" style="left:596px;top:559px;font-size:7px;color:#d0d0d0;">▾≡</div>
<div class="a btn" style="left:17px;top:610px;width:77px;height:14px;"></div>
<div class="t" style="left:26px;top:613px;font-size:8.4px;color:#f0f0f0;">创建视频时间轴</div>
<div class="a btn" style="left:96px;top:610px;width:15px;height:14px;"></div>
<div class="t" style="left:100px;top:614px;font-size:7px;color:#ececec;">▼</div>
<!-- right column -->
<div class="a" id="rtop"></div>
<div class="a" id="strip"></div>
<div class="a" id="layers"></div>
<div class="a" style="left:613px;top:204px;width:24px;height:429px;background:#4c4c4c;"></div>
<div class="a" style="left:617px;top:51px;width:16px;height:3px;background:repeating-linear-gradient(90deg,#3c3c3c 0 1px,#5a5a5a 1px 2px);opacity:.8"></div>
<div class="a" style="left:617px;top:101px;width:16px;height:3px;background:repeating-linear-gradient(90deg,#3c3c3c 0 1px,#5a5a5a 1px 2px);opacity:.8"></div>
<div class="a" style="left:617px;top:150px;width:16px;height:3px;background:repeating-linear-gradient(90deg,#3c3c3c 0 1px,#5a5a5a 1px 2px);opacity:.8"></div>
<div class="a" style="left:617px;top:178px;width:16px;height:3px;background:repeating-linear-gradient(90deg,#3c3c3c 0 1px,#5a5a5a 1px 2px);opacity:.8"></div>
<svg class="a" style="left:615px;top:30px" width="19" height="19" viewBox="0 0 18 20"><path d="M2 2H8V6H11V11" fill="none" stroke="#e2e2e2" stroke-width="1.6"/><path d="M2 2V13Q2 17 6 16" fill="none" stroke="#e2e2e2" stroke-width="1.6"/><rect x="9" y="9" width="7" height="9" rx="2" fill="#cfcfcf" stroke="#eee"/><path d="M4 5L7 9" stroke="#ddd" stroke-width="1.2"/></svg>
<svg class="a" style="left:617px;top:58px" width="15" height="17" viewBox="0 0 16 19"><path d="M3 2L6 9M8 0V9M13 2L10 9" stroke="#e4e4e4" stroke-width="1.8"/><path d="M4 9H12L11 18H5Z" fill="#dcdcdc"/></svg>
<svg class="a" style="left:616px;top:80px" width="17" height="15" viewBox="0 0 18 16"><path d="M1 3H12L16 1V6L12 5H1Z" fill="#e0e0e0"/><path d="M3 10Q8 7 12 10L16 9V14L12 12Q8 14 3 10Z" fill="#d8d8d8"/></svg>
<div class="t" style="left:620px;top:106px;font-size:14px;font-weight:bold;color:#dedede;">¶</div>
<div class="t" style="left:618px;top:128px;font-size:14px;color:#e4e4e4;">A</div>
<div class="a" style="left:629px;top:128px;width:1px;height:15px;background:#e0e0e0;"></div>
<svg class="a" style="left:618px;top:156px" width="13" height="14" viewBox="0 0 16 17"><path d="M8 0.5L15.5 4V12.5L8 16.5L0.5 12.5V4Z" fill="#e4e4e4"/><path d="M8 8L15.5 4M8 8L0.5 4M8 8V16.5" stroke="#555" stroke-width="1.2" fill="none"/><path d="M8 8L15.5 4V12.5L8 16.5Z" fill="#bdbdbd"/></svg>
<svg class="a" style="left:618px;top:185px" width="13" height="15" viewBox="0 0 16 18"><path d="M3 1L9 5L5 9L11 13L7 17" stroke="#6a6a6a" stroke-width="3" fill="none"/><path d="M10 2L14 9L10 16" stroke="#666" stroke-width="2" fill="none"/></svg>
<svg class="a" style="left:672px;top:28px" width="11" height="10" preserveAspectRatio="none" viewBox="0 0 12 12"><circle cx="6" cy="6" r="2.6" fill="#e6e6e6"/><path d="M6 0V2M6 10V12M0 6H2M10 6H12M1.8 1.8L3.2 3.2M8.8 8.8L10.2 10.2M1.8 10.2L3.2 8.8M8.8 3.2L10.2 1.8" stroke="#e6e6e6" stroke-width="1.2"/></svg>
<svg class="a" style="left:688px;top:28px" width="11" height="10" preserveAspectRatio="none" viewBox="0 0 12 12"><path d="M0.5 10.5H11.5V9L10 4L9 8L7.5 2L6 8L4.5 3L3 8L1.5 5L0.5 9Z" fill="#e0e0e0"/><rect x="0" y="10" width="12" height="1.5" fill="#eee"/></svg>
<svg class="a" style="left:704px;top:28px" width="11" height="10" preserveAspectRatio="none" viewBox="0 0 12 12"><rect x="0.5" y="0.5" width="11" height="11" fill="#4a4a4a" stroke="#cfcfcf"/><path d="M1 11Q6 10 7 6T11 1" stroke="#eee" fill="none" stroke-width="1.2"/><path d="M1 4H11M1 8H11" stroke="#aaa" stroke-width="0.6"/></svg>
<svg class="a" style="left:721px;top:28px" width="11" height="10" preserveAspectRatio="none" viewBox="0 0 12 12"><rect x="0.5" y="0.5" width="11" height="11" fill="#e4e4e4" stroke="#cfcfcf"/><path d="M11 1V11H1Z" fill="#444"/><path d="M2 3H5M3.5 1.5V4.5" stroke="#333" stroke-width="0.9"/><path d="M7 9H10" stroke="#eee" stroke-width="0.9"/></svg>
<svg class="a" style="left:738px;top:28px" width="11" height="10" preserveAspectRatio="none" viewBox="0 0 12 12"><path d="M0.5 1H11.5L6 11Z" fill="none" stroke="#e4e4e4" stroke-width="1.6"/><path d="M3.5 3.5H8.5L6 8Z" fill="#6a6a6a"/></svg>
<svg class="a" style="left:663px;top:47px" width="11" height="10" preserveAspectRatio="none" viewBox="0 0 12 12"><rect x="0.5" y="0.5" width="11" height="11" fill="#dadada" stroke="#cfcfcf"/><rect x="1" y="1" width="4" height="6" fill="#555"/><rect x="1" y="8" width="10" height="3" fill="#8a8a8a"/></svg>
<svg class="a" style="left:680px;top:47px" width="11" height="10" preserveAspectRatio="none" viewBox="0 0 12 12"><path d="M6 1V10M1.5 3.5H10.5M1.5 3.5L0 8H3ZM10.5 3.5L9 8H12Z" stroke="#e4e4e4" stroke-width="1.1" fill="#e4e4e4"/><rect x="3" y="10" width="6" height="1.5" fill="#e4e4e4"/></svg>
<svg class="a" style="left:696px;top:47px" width="11" height="10" preserveAspectRatio="none" viewBox="0 0 12 12"><rect x="0.5" y="0.5" width="11" height="11" fill="#3c3c3c" stroke="#d8d8d8"/><rect x="1" y="1" width="5" height="10" fill="#e8e8e8"/></svg>
<svg class="a" style="left:712px;top:47px" width="11" height="10" preserveAspectRatio="none" viewBox="0 0 12 12"><circle cx="5" cy="6" r="4" fill="none" stroke="#e0e0e0" stroke-width="1.6"/><circle cx="8.5" cy="8.5" r="2.8" fill="#bdbdbd" stroke="#555" stroke-width="0.8"/><rect x="1" y="0.5" width="4" height="2" fill="#e0e0e0"/></svg>
<svg class="a" style="left:729px;top:47px" width="11" height="10" preserveAspectRatio="none" viewBox="0 0 12 12"><circle cx="6" cy="4" r="3.2" fill="#e6e6e6"/><circle cx="3.6" cy="8" r="3.2" fill="#dcdcdc"/><circle cx="8.4" cy="8" r="3.2" fill="#d0d0d0"/><circle cx="6" cy="6.8" r="1.6" fill="#4a4a4a"/></svg>
<svg class="a" style="left:746px;top:47px" width="11" height="10" preserveAspectRatio="none" viewBox="0 0 12 12"><rect x="0.5" y="0.5" width="11" height="11" fill="#d8d8d8" stroke="#e6e6e6"/><path d="M0 4H12M0 8H12M4 0V12M8 0V12" stroke="#4a4a4a" stroke-width="1"/></svg>
<svg class="a" style="left:672px;top:66px" width="11" height="10" preserveAspectRatio="none" viewBox="0 0 12 12"><rect x="0.5" y="0.5" width="11" height="11" fill="#d8d8d8" stroke="#e0e0e0"/><circle cx="6" cy="6" r="3.4" fill="#3c3c3c"/><path d="M6 2.6A3.4 3.4 0 0 1 6 9.4Z" fill="#f4f4f4"/></svg>
<svg class="a" style="left:688px;top:66px" width="11" height="10" preserveAspectRatio="none" viewBox="0 0 12 12"><rect x="0.5" y="0.5" width="11" height="11" fill="#d0d0d0" stroke="#e0e0e0"/><path d="M1 11L11 1V5L5 11Z" fill="#505050"/><path d="M7 11L11 7V11Z" fill="#888"/></svg>
<svg class="a" style="left:704px;top:66px" width="11" height="10" preserveAspectRatio="none" viewBox="0 0 12 12"><rect x="0.5" y="0.5" width="11" height="11" fill="#e8e8e8" stroke="#e0e0e0"/><path d="M1 11L11 1V4L8 5L7 8L4 9L3 11Z" fill="#333"/></svg>
<svg class="a" style="left:721px;top:66px" width="11" height="10" preserveAspectRatio="none" viewBox="0 0 12 12"><rect x="0.5" y="0.5" width="11" height="11" fill="#d8d8d8" stroke="#e0e0e0"/><path d="M1 1L6 6L11 1Z" fill="#4a4a4a"/><rect x="1" y="8" width="10" height="3" fill="#777"/></svg>
<svg class="a" style="left:737px;top:66px" width="11" height="10" preserveAspectRatio="none" viewBox="0 0 12 12"><rect x="0.5" y="0.5" width="11" height="11" fill="#cfcfcf" stroke="#e0e0e0"/><rect x="1" y="1" width="5" height="10" fill="#555"/><path d="M7 3H10M7 6H10M7 9H10" stroke="#555" stroke-width="1"/></svg>
<div class="a" style="left:640px;top:82px;width:160px;height:16px;background:#343434;border-top:1px solid #2c2c2c;"></div>
<div class="a" style="left:641px;top:84px;width:24px;height:14px;background:#4f4f4f;"></div>
<div class="t" style="left:645px;top:87px;font-size:8px;color:#9c9c9c;">图层</div>
<div class="t" style="left:670px;top:87px;font-size:8px;color:#6c6c6c;">通道</div>
<div class="t" style="left:696px;top:87px;font-size:8px;color:#6c6c6c;">路径</div>
<div class="t" style="left:791px;top:87px;font-size:6px;color:#c8c8c8;">▾≡</div>
<div class="a btn" style="left:641px;top:102px;width:57px;height:12px;"></div>
<svg class="a" style="left:645px;top:104px" width="8" height="9" viewBox="0 0 8 9"><circle cx="4.6" cy="3.4" r="2.5" fill="none" stroke="#e6e6e6" stroke-width="1.3"/><path d="M2.8 5.4L0.6 8.2" stroke="#e6e6e6" stroke-width="1.4"/></svg>
<div class="t" style="left:655px;top:104px;font-size:8px;color:#e8e8e8;">类型</div>
<div class="t" style="left:690px;top:104px;font-size:4px;line-height:4px;color:#ddd;">▲<br>▼</div>
<svg class="a" style="left:708px;top:103px" width="9" height="9" viewBox="0 0 11 11"><rect x="0.5" y="0.5" width="10" height="10" fill="#5c5c5c" stroke="#e0e0e0"/><path d="M1.5 9L4.5 4L6.5 7L8 5.5L9.5 9Z" fill="#e0e0e0"/></svg>
<svg class="a" style="left:725px;top:103px" width="9" height="9" viewBox="0 0 11 11"><circle cx="5.5" cy="5.5" r="4.6" fill="#3c3c3c" stroke="#e0e0e0" stroke-width="1.2"/><path d="M5.5 0.9A4.6 4.6 0 0 0 2.2 8.8L8.8 2.2A4.6 4.6 0 0 0 5.5 0.9Z" fill="#e0e0e0"/></svg>
<div class="t" style="left:742px;top:102px;font-size:10px;font-family:'Liberation Serif',serif;color:#e6e6e6;">T</div>
<svg class="a" style="left:758px;top:103px" width="9" height="9" viewBox="0 0 11 11"><rect x="2" y="2" width="7" height="7" fill="none" stroke="#e0e0e0" stroke-width="1.1"/><rect x="0.5" y="0.5" width="3" height="3" fill="#e6e6e6"/><rect x="7.5" y="0.5" width="3" height="3" fill="#e6e6e6"/><rect x="0.5" y="7.5" width="3" height="3" fill="#e6e6e6"/><rect x="7.5" y="7.5" width="3" height="3" fill="#e6e6e6"/></svg>
<svg class="a" style="left:774px;top:103px" width="9" height="9" viewBox="0 0 11 11"><path d="M3.5 0.5H8L10.5 3V8H7V10.5H0.5V5H3.5Z" fill="#dcdcdc" stroke="#eee" stroke-width="0.8"/><rect x="4.5" y="4" width="3" height="3" fill="#555"/></svg>
<div class="a" style="left:792px;top:102px;width:8px;height:12px;background:#3a3a3a;border-radius:3px 0 0 3px;"></div>
<div class="a" style="left:793px;top:103px;width:7px;height:5px;background:#8a8a8a;border-radius:2px 0 0 2px;"></div>
<div class="a btn" style="left:641px;top:120px;width:77px;height:12px;"></div>
<div class="t" style="left:647px;top:122px;font-size:8px;color:#e8e8e8;">正常</div>
<div class="t" style="left:710px;top:122px;font-size:4px;line-height:4px;color:#ddd;">▲<br>▼</div>
<div class="t" style="left:723px;top:122px;font-size:8px;color:#dcdcdc;letter-spacing:0.6px;">不透明度:</div>
<div class="a fld" style="left:762px;top:120px;width:24px;height:13px;"></div>
<div class="t" style="left:764px;top:122px;font-size:8px;color:#e8e8e8;">100%</div>
<div class="a btn" style="left:788px;top:120px;width:13px;height:13px;"></div>
<div class="t" style="left:791px;top:124px;font-size:5px;color:#ddd;">▼</div>
<div class="t" style="left:643px;top:142px;font-size:8px;color:#dcdcdc;">锁定:</div>
<svg class="a" style="left:670px;top:141px" width="9" height="9" viewBox="0 0 9 9"><rect x="0.5" y="0.5" width="8" height="8" fill="#5e5e5e" stroke="#747474"/><rect x="1" y="1" width="3.5" height="3.5" fill="#787878"/><rect x="4.5" y="4.5" width="3.5" height="3.5" fill="#787878"/></svg>
<svg class="a" style="left:683px;top:140px" width="11" height="10" viewBox="0 0 12 12"><path d="M11 1L4.5 8" stroke="#808080" stroke-width="1.8"/><path d="M1 11Q1.5 7.5 4.5 8Q5 10.5 1 11Z" fill="#808080"/></svg>
<svg class="a" style="left:698px;top:141px" width="9" height="9" viewBox="0 0 11 11"><path d="M5.5 0L7.5 2.5H6.2V4.8H8.5V3.5L11 5.5L8.5 7.5V6.2H6.2V8.5H7.5L5.5 11L3.5 8.5H4.8V6.2H2.5V7.5L0 5.5L2.5 3.5V4.8H4.8V2.5H3.5Z" fill="#dedede"/></svg>
<svg class="a" style="left:714px;top:140px" width="8" height="10.5" viewBox="0 0 9 12"><path d="M2.2 6V3.6A2.3 2.3 0 0 1 6.8 3.6V6" fill="none" stroke="#e4e4e4" stroke-width="1.4"/><rect x="0.5" y="5.5" width="8" height="6" rx="0.8" fill="#e4e4e4"/><rect x="3.8" y="7.5" width="1.4" height="2.2" fill="#444"/></svg>
<div class="t" style="left:740px;top:142px;font-size:8px;color:#dcdcdc;">填充:</div>
<div class="a fld" style="left:762px;top:139px;width:24px;height:13px;"></div>
<div class="t" style="left:764px;top:142px;font-size:8px;color:#e8e8e8;">100%</div>
<div class="a btn" style="left:788px;top:139px;width:13px;height:13px;"></div>
<div class="t" style="left:791px;top:144px;font-size:5px;color:#ddd;">▼</div>
<div class="a" style="left:640px;top:154px;width:160px;height:1px;background:#3e3e3e;"></div>
<div class="a" style="left:640px;top:237px;width:160px;height:177px;background:#474747;"></div>
<div class="a" style="left:640px;top:155px;width:154px;height:28px;background:#4f4f4f;border-bottom:1px solid #3f3f3f;"></div>
<div class="a" style="left:640px;top:183px;width:154px;height:27px;background:#4f4f4f;border-bottom:1px solid #3f3f3f;"></div>
<div class="a" style="left:660px;top:184px;width:134px;height:25px;background:#64789c;"></div>
<div class="a" style="left:640px;top:210px;width:154px;height:27px;background:#4f4f4f;border-bottom:1px solid #3f3f3f;"></div>
<div class="a" style="left:659px;top:155px;width:1px;height:82px;background:#444;"></div>
<div class="a" style="left:794px;top:155px;width:6px;height:82px;background:#4a4a4a;border-left:1px solid #444;"></div>
<svg class="a" style="left:644px;top:165px" width="11" height="8" viewBox="0 0 11 8"><path d="M0.3 4Q5.5 -1.5 10.7 4Q5.5 9 0.3 4Z" fill="#d2d2d2"/><circle cx="5.5" cy="4" r="2.2" fill="#3a3a3a"/><circle cx="4.8" cy="3.2" r="0.8" fill="#e8e8e8"/></svg>
<svg class="a" style="left:644px;top:192px" width="11" height="8" viewBox="0 0 11 8"><path d="M0.3 4Q5.5 -1.5 10.7 4Q5.5 9 0.3 4Z" fill="#d2d2d2"/><circle cx="5.5" cy="4" r="2.2" fill="#3a3a3a"/><circle cx="4.8" cy="3.2" r="0.8" fill="#e8e8e8"/></svg>
<svg class="a" style="left:644px;top:219px" width="11" height="8" viewBox="0 0 11 8"><path d="M0.3 4Q5.5 -1.5 10.7 4Q5.5 9 0.3 4Z" fill="#d2d2d2"/><circle cx="5.5" cy="4" r="2.2" fill="#3a3a3a"/><circle cx="4.8" cy="3.2" r="0.8" fill="#e8e8e8"/></svg>
<div class="t" style="left:665px;top:165px;font-size:7px;color:#ddd;">↲</div>
<div class="a" style="left:673px;top:159px;width:22px;height:22px;background:#e8cf94;border:1px solid #c9b078;"></div>
<div class="a" style="left:686px;top:172px;width:9px;height:10px;background:#333;"></div>
<svg class="a" style="left:688px;top:174px" width="6" height="7" viewBox="0 0 6 7"><path d="M1.5 0.5H4L5.5 2V5H3.5V6.5H0.5V2.5H1.5Z" fill="#e0e0e0"/></svg>
<div class="t" style="left:701px;top:168px;font-size:8px;color:#e8e8e8;">木纹</div>
<div class="a" style="left:661px;top:184px;width:24px;height:24px;border:1px solid #fff;background-color:#fff;background-image:linear-gradient(45deg,#dedede 25%,transparent 25%,transparent 75%,#dedede 75%),linear-gradient(45deg,#dedede 25%,transparent 25%,transparent 75%,#dedede 75%);background-size:6px 6px;background-position:0 0,3px 3px;"></div>
<div class="a" style="left:675px;top:198px;width:10px;height:10px;background:#333;border:1px solid #222;"></div>
<svg class="a" style="left:677px;top:200px" width="7" height="7" viewBox="0 0 7 7"><rect x="1" y="1" width="5" height="5" fill="#7f93b5" stroke="#c8d2e4" stroke-width="0.8"/></svg>
<div class="t" style="left:688px;top:192px;font-size:8px;color:#f4f4f4;text-decoration:underline;letter-spacing:1.2px;">圆角矩形 1</div>
<div class="a" style="left:663px;top:213px;width:21px;height:20px;background:#7a7a7a;border:1px solid #666;"></div>
<div class="t" style="left:690px;top:220px;font-size:8px;font-style:italic;color:#e8e8e8;">背景</div>
<svg class="a" style="left:774px;top:218px" width="9" height="10.5" viewBox="0 0 10 12"><path d="M2.6 6V3.8A2.4 2.4 0 0 1 7.4 3.8V6" fill="none" stroke="#dedede" stroke-width="1.3"/><rect x="1" y="6" width="8" height="5.5" fill="none" stroke="#dedede" stroke-width="1.3"/></svg>
<div class="a" style="left:640px;top:414px;width:160px;height:15px;background:#4e4e4e;border-top:1px solid #3a3a3a;border-bottom:1px solid #383838;"></div>
<!-- layers toolbar icons -->
<svg class="a" style="left:663px;top:418px" width="12" height="7" viewBox="0 0 12 7"><rect x="0.8" y="1" width="6" height="5" rx="2.5" fill="none" stroke="#7c7c7c" stroke-width="1.2"/><rect x="5.2" y="1" width="6" height="5" rx="2.5" fill="none" stroke="#7c7c7c" stroke-width="1.2"/></svg>
<div class="t" style="left:684px;top:415px;font-size:11px;font-style:italic;font-weight:bold;font-family:'Liberation Serif',serif;color:#e2e2e2;">fx</div>
<div class="t" style="left:694px;top:423px;font-size:4px;color:#ccc;">▼</div>
<svg class="a" style="left:701px;top:416px" width="12" height="10" viewBox="0 0 12 10"><rect x="0.5" y="0.5" width="11" height="9" fill="#e0e0e0"/><circle cx="6" cy="5" r="2.8" fill="#444"/></svg>
<svg class="a" style="left:720px;top:416px" width="11" height="11" viewBox="0 0 11 11"><circle cx="5.5" cy="5.5" r="4.6" fill="#444" stroke="#e0e0e0" stroke-width="1.2"/><path d="M5.5 0.9A4.6 4.6 0 0 0 2.2 8.8L8.8 2.2A4.6 4.6 0 0 0 5.5 0.9Z" fill="#e0e0e0"/></svg>
<div class="t" style="left:731px;top:423px;font-size:4px;color:#ccc;">▼</div>
<svg class="a" style="left:737px;top:416px" width="12" height="10" viewBox="0 0 12 10"><path d="M0.5 1H4.5L5.5 2.5H11.5V9.5H0.5Z" fill="#dcdcdc"/></svg>
<svg class="a" style="left:757px;top:416px" width="10" height="11" viewBox="0 0 10 11"><path d="M0.5 0.5H9.5V7L6.5 10.5H0.5Z" fill="#dedede"/><path d="M9.5 7H6.5V10.5" fill="#777"/><rect x="4" y="0.5" width="2" height="6" fill="#555"/></svg>
<svg class="a" style="left:775px;top:416px" width="10" height="11" viewBox="0 0 10 11"><path d="M0.5 2.5H9.5M3.5 2V0.8H6.5V2" stroke="#cfcfcf" stroke-width="1.2" fill="none"/><path d="M1.5 4H8.5L7.8 10.5H2.2Z" fill="#cfcfcf"/><path d="M3.8 5V9.5M6.2 5V9.5" stroke="#555" stroke-width="0.8"/></svg>
<!-- history panel -->
<div class="a" id="history"></div>
<div class="a" style="left:640px;top:429px;width:160px;height:12px;background:#393939;"></div>
<div class="a" style="left:641px;top:430px;width:39px;height:11px;background:#4e4e4e;"></div>
<div class="t" style="left:643px;top:431px;font-size:8px;color:#dcdcdc;letter-spacing:0.3px;">历史记录</div>
<div class="t" style="left:791px;top:432px;font-size:6px;color:#c8c8c8;">▾≡</div>
<div class="a" style="left:794px;top:441px;width:6px;height:192px;background:#4a4a4a;border-left:1px solid #424242;"></div>
<svg class="a" style="left:641px;top:449px" width="11" height="10" viewBox="0 0 11 10"><path d="M10.5 0.5L4.5 6" stroke="#e6e6e6" stroke-width="2"/><path d="M0.5 9.5Q1 5.5 4.5 6Q5 8.5 0.5 9.5Z" fill="#e6e6e6"/><path d="M1 3Q4 0 7 1" stroke="#ddd" stroke-width="1" fill="none"/></svg>
<div class="a" style="left:656px;top:444px;width:22px;height:21px;background:#fdfdfd;border:1px solid #999;"></div>
<div class="t" style="left:680px;top:450px;font-size:8px;color:#e6e6e6;letter-spacing:0.5px;">未标题-1</div>
<div class="a" style="left:640px;top:467px;width:154px;height:2px;background:#3c3c3c;border-bottom:1px solid #5a5a5a;"></div>
<div class="a" style="left:640px;top:484px;width:154px;height:1px;background:#434343;"></div>
<div class="a" style="left:641px;top:472px;width:10px;height:10px;background:#565656;border:1px solid #626262;border-top-color:#424242;border-left-color:#424242;"></div>
<svg class="a" style="left:660px;top:471px" width="11" height="12" viewBox="0 0 11 12"><path d="M0.5 2.5H3.5V0.5H10.5V11.5H0.5Z" fill="#e2e2e2"/><path d="M1.5 5H9.5M1.5 7.5H9.5M1.5 10H9.5" stroke="#666" stroke-width="0.9"/><path d="M4.5 2H9.5" stroke="#555" stroke-width="1"/></svg>
<div class="t" style="left:679px;top:474px;font-size:8px;color:#e6e6e6;letter-spacing:0.2px;">新建</div>
<div class="a" style="left:640px;top:500px;width:154px;height:1px;background:#434343;"></div>
<div class="a" style="left:641px;top:488px;width:10px;height:10px;background:#565656;border:1px solid #626262;border-top-color:#424242;border-left-color:#424242;"></div>
<svg class="a" style="left:660px;top:487px" width="11" height="12" viewBox="0 0 11 12"><path d="M0.5 2.5H3.5V0.5H10.5V11.5H0.5Z" fill="#e2e2e2"/><path d="M1.5 5H9.5M1.5 7.5H9.5M1.5 10H9.5" stroke="#666" stroke-width="0.9"/><path d="M4.5 2H9.5" stroke="#555" stroke-width="1"/></svg>
<div class="t" style="left:679px;top:490px;font-size:8px;color:#e6e6e6;letter-spacing:0.2px;">填充</div>
<div class="a" style="left:640px;top:516px;width:154px;height:1px;background:#434343;"></div>
<div class="a" style="left:641px;top:504px;width:10px;height:10px;background:#565656;border:1px solid #626262;border-top-color:#424242;border-left-color:#424242;"></div>
<svg class="a" style="left:660px;top:503px" width="11" height="12" viewBox="0 0 11 12"><path d="M0.5 2.5H3.5V0.5H10.5V11.5H0.5Z" fill="#e2e2e2"/><path d="M1.5 5H9.5M1.5 7.5H9.5M1.5 10H9.5" stroke="#666" stroke-width="0.9"/><path d="M4.5 2H9.5" stroke="#555" stroke-width="1"/></svg>
<div class="t" style="left:679px;top:506px;font-size:8px;color:#e6e6e6;letter-spacing:0.2px;">新建图层</div>
<div class="a" style="left:640px;top:531px;width:154px;height:1px;background:#434343;"></div>
<div class="a" style="left:641px;top:519px;width:10px;height:10px;background:#565656;border:1px solid #626262;border-top-color:#424242;border-left-color:#424242;"></div>
<svg class="a" style="left:660px;top:518px" width="11" height="12" viewBox="0 0 11 12"><path d="M0.5 2.5H3.5V0.5H10.5V11.5H0.5Z" fill="#e2e2e2"/><path d="M1.5 5H9.5M1.5 7.5H9.5M1.5 10H9.5" stroke="#666" stroke-width="0.9"/><path d="M4.5 2H9.5" stroke="#555" stroke-width="1"/></svg>
<div class="t" style="left:679px;top:521px;font-size:8px;color:#e6e6e6;letter-spacing:0.2px;">圆角矩形工具</div>
<div class="a" style="left:640px;top:547px;width:154px;height:1px;background:#434343;"></div>
<div class="a" style="left:641px;top:535px;width:10px;height:10px;background:#565656;border:1px solid #626262;border-top-color:#424242;border-left-color:#424242;"></div>
<svg class="a" style="left:660px;top:534px" width="11" height="12" viewBox="0 0 11 12"><path d="M0.5 2.5H3.5V0.5H10.5V11.5H0.5Z" fill="#e2e2e2"/><path d="M1.5 5H9.5M1.5 7.5H9.5M1.5 10H9.5" stroke="#666" stroke-width="0.9"/><path d="M4.5 2H9.5" stroke="#555" stroke-width="1"/></svg>
<div class="t" style="left:679px;top:537px;font-size:8px;color:#e6e6e6;letter-spacing:0.2px;">水平居中对齐</div>
<div class="a" style="left:640px;top:563px;width:154px;height:1px;background:#434343;"></div>
<div class="a" style="left:641px;top:551px;width:10px;height:10px;background:#565656;border:1px solid #626262;border-top-color:#424242;border-left-color:#424242;"></div>
<svg class="a" style="left:660px;top:550px" width="11" height="12" viewBox="0 0 11 12"><path d="M0.5 2.5H3.5V0.5H10.5V11.5H0.5Z" fill="#e2e2e2"/><path d="M1.5 5H9.5M1.5 7.5H9.5M1.5 10H9.5" stroke="#666" stroke-width="0.9"/><path d="M4.5 2H9.5" stroke="#555" stroke-width="1"/></svg>
<div class="t" style="left:679px;top:553px;font-size:8px;color:#e6e6e6;letter-spacing:0.2px;">垂直居中对齐</div>
<div class="a" style="left:640px;top:579px;width:154px;height:1px;background:#434343;"></div>
<div class="a" style="left:641px;top:567px;width:10px;height:10px;background:#565656;border:1px solid #626262;border-top-color:#424242;border-left-color:#424242;"></div>
<svg class="a" style="left:660px;top:566px" width="11" height="12" viewBox="0 0 11 12"><path d="M0.5 2.5H3.5V0.5H10.5V11.5H0.5Z" fill="#e2e2e2"/><path d="M1.5 5H9.5M1.5 7.5H9.5M1.5 10H9.5" stroke="#666" stroke-width="0.9"/><path d="M4.5 2H9.5" stroke="#555" stroke-width="1"/></svg>
<div class="t" style="left:679px;top:569px;font-size:8px;color:#e6e6e6;letter-spacing:0.2px;">填充图层</div>
<div class="a" style="left:640px;top:594px;width:154px;height:1px;background:#434343;"></div>
<div class="a" style="left:641px;top:582px;width:10px;height:10px;background:#565656;border:1px solid #626262;border-top-color:#424242;border-left-color:#424242;"></div>
<svg class="a" style="left:660px;top:581px" width="11" height="12" viewBox="0 0 11 12"><path d="M0.5 2.5H3.5V0.5H10.5V11.5H0.5Z" fill="#e2e2e2"/><path d="M1.5 5H9.5M1.5 7.5H9.5M1.5 10H9.5" stroke="#666" stroke-width="0.9"/><path d="M4.5 2H9.5" stroke="#555" stroke-width="1"/></svg>
<div class="t" style="left:679px;top:584px;font-size:8px;color:#e6e6e6;letter-spacing:0.2px;">置入嵌入的智能对象</div>
<div class="a" style="left:640px;top:610px;width:154px;height:1px;background:#434343;"></div>
<div class="a" style="left:641px;top:598px;width:10px;height:10px;background:#565656;border:1px solid #626262;border-top-color:#424242;border-left-color:#424242;"></div>
<svg class="a" style="left:660px;top:597px" width="11" height="12" viewBox="0 0 11 12"><path d="M0.5 2.5H3.5V0.5H10.5V11.5H0.5Z" fill="#e2e2e2"/><path d="M1.5 5H9.5M1.5 7.5H9.5M1.5 10H9.5" stroke="#666" stroke-width="0.9"/><path d="M4.5 2H9.5" stroke="#555" stroke-width="1"/></svg>
<div class="t" style="left:679px;top:600px;font-size:8px;color:#e6e6e6;letter-spacing:0.2px;">栅格化图层</div>
<div class="a" style="left:640px;top:613px;width:154px;height:13px;background:#6c82a6;"></div>
<div class="a" style="left:640px;top:626px;width:154px;height:1px;background:#434343;"></div>
<div class="a" style="left:641px;top:614px;width:10px;height:10px;background:#565656;border:1px solid #626262;border-top-color:#424242;border-left-color:#424242;"></div>
<svg class="a" style="left:660px;top:613px" width="11" height="12" viewBox="0 0 11 12"><path d="M0.5 2.5H3.5V0.5H10.5V11.5H0.5Z" fill="#e2e2e2"/><path d="M1.5 5H9.5M1.5 7.5H9.5M1.5 10H9.5" stroke="#666" stroke-width="0.9"/><path d="M4.5 2H9.5" stroke="#555" stroke-width="1"/></svg>
<div class="t" style="left:679px;top:616px;font-size:8px;color:#e6e6e6;letter-spacing:0.2px;">创建剪贴蒙版</div>
<!-- watermark -->
<svg class="a" style="left:640px;top:540px" width="160" height="93" viewBox="640 540 160 93"><polygon points="800,559.5 670,593 661,633 800,633" fill="#ffffff"/><polygon points="800,565.5 677,633 800,633" fill="#3fa7e6"/></svg>
<div class="t" style="left:740px;top:596px;font-size:12.5px;font-family:'Liberation Mono',monospace;color:#d4eefc;">jb51.net</div>
<div class="t" style="left:705px;top:608px;font-size:23px;font-weight:400;letter-spacing:1.6px;color:#e2f4fe;">脚本之家</div>

<div class="a" style="left:616px;top:27px;width:17px;height:3px;background:repeating-linear-gradient(#3c3c3c 0 1px,#5a5a5a 1px 2px);opacity:.7"></div>
<!-- properties panel -->
<div class="a" id="props"></div>
<div class="a" style="left:434px;top:0;width:176px;height:8px;background:#4a4a4a;"></div>
<div class="a" style="left:460px;top:0;width:120px;height:7px;background:#383838;border-bottom:1px solid #404040;"></div>
<div class="t" style="left:439px;top:-2px;font-size:8px;color:#9a9a9a;">属性</div>
<svg class="a" style="left:582px;top:0" width="11" height="7" viewBox="0 0 11 7"><path d="M0.5 0L5 3L0.5 6ZM5.5 0L10 3L5.5 6Z" fill="#d4d4d4"/></svg>
<div class="a" style="left:598px;top:29px;width:12px;height:195px;background:#404040;border-left:1px solid #3c3c3c;"></div>
<!-- header row -->
<div class="a" style="left:442px;top:13px;width:13px;height:12px;background:#3a3a3a;border:1px solid #333;"></div>
<svg class="a" style="left:444px;top:15px" width="9" height="8" viewBox="0 0 9 8"><rect x="1.5" y="1.5" width="6" height="5" fill="none" stroke="#ddd" stroke-width="1"/><rect x="0" y="0" width="2" height="2" fill="#eee"/><rect x="7" y="0" width="2" height="2" fill="#eee"/><rect x="0" y="6" width="2" height="2" fill="#eee"/><rect x="7" y="6" width="2" height="2" fill="#eee"/></svg>
<div class="a" style="left:459px;top:14px;width:13px;height:10px;background:#e4e4e4;border:1px solid #bbb;"></div>
<div class="a" style="left:462px;top:16px;width:7px;height:6px;border-radius:50%;background:#3c3c3c;"></div>
<div class="t" style="left:478px;top:16px;font-size:8.2px;color:#e4e4e4;">实时形状属性</div>
<div class="a" style="left:434px;top:26px;width:165px;height:3px;background:#424242;border-bottom:1px solid #5a5a5a;"></div>
<!-- W/H -->
<div class="t" style="left:441px;top:42px;font-size:8px;color:#d8d8d8;">W:</div>
<div class="a fld" style="left:455px;top:39px;width:37px;height:13px;"></div>
<div class="t" style="left:457px;top:42px;font-size:8.2px;color:#e6e6e6;">512 像素</div>
<svg class="a" style="left:499px;top:42px" width="12" height="7" viewBox="0 0 12 7"><rect x="0.8" y="1" width="6" height="5" rx="2.5" fill="none" stroke="#d4d4d4" stroke-width="1.4"/><rect x="5.2" y="1" width="6" height="5" rx="2.5" fill="none" stroke="#d4d4d4" stroke-width="1.4"/></svg>
<div class="t" style="left:519px;top:42px;font-size:8px;color:#d8d8d8;">H:</div>
<div class="a fld" style="left:530px;top:39px;width:38px;height:13px;"></div>
<div class="t" style="left:533px;top:42px;font-size:8px;color:#e6e6e6;">512 像素</div>
<!-- X/Y -->
<div class="t" style="left:444px;top:62px;font-size:8px;color:#d8d8d8;">X:</div>
<div class="a fld" style="left:455px;top:59px;width:37px;height:13px;"></div>
<div class="t" style="left:457px;top:62px;font-size:8.2px;color:#e6e6e6;">244 像素</div>
<div class="t" style="left:520px;top:62px;font-size:8px;color:#d8d8d8;">Y:</div>
<div class="a fld" style="left:530px;top:59px;width:38px;height:13px;"></div>
<div class="t" style="left:533px;top:62px;font-size:8px;color:#e6e6e6;">244 像素</div>
<!-- fill / stroke -->
<div class="a" style="left:441px;top:81px;width:18px;height:12px;background:#fbfbfb;border:1px solid #777;"></div>
<div class="a" style="left:464px;top:81px;width:18px;height:12px;background:#f4f4f4;border:1px solid #777;"></div>
<div class="a" style="left:467px;top:86px;width:12px;height:3px;background:#555;"></div>
<div class="a fld" style="left:487px;top:81px;width:42px;height:13px;"></div>
<div class="t" style="left:489px;top:84px;font-size:8px;color:#e6e6e6;">1 点</div>
<div class="a btn" style="left:529px;top:81px;width:15px;height:13px;"></div>
<div class="t" style="left:533px;top:85px;font-size:5px;color:#ddd;">▼</div>
<div class="a btn" style="left:548px;top:81px;width:20px;height:13px;"></div>
<div class="a" style="left:551px;top:86px;width:14px;height:2px;background:repeating-linear-gradient(90deg,#e8e8e8 0 4px,transparent 4px 5px);"></div>
<!-- three dropdowns -->
<div class="a btn" style="left:441px;top:97px;width:42px;height:14px;"></div>
<div class="a btn" style="left:487px;top:97px;width:42px;height:14px;"></div>
<div class="a btn" style="left:535px;top:97px;width:33px;height:14px;"></div>
<svg class="a" style="left:447px;top:99px" width="10" height="10" viewBox="0 0 10 10"><rect x="2" y="2" width="6" height="6" fill="#2a2a2a"/><rect x="0.5" y="0.5" width="9" height="9" fill="none" stroke="#ccc" stroke-width="1" stroke-dasharray="2 1"/></svg>
<svg class="a" style="left:494px;top:99px" width="8" height="10" viewBox="0 0 8 10"><rect x="2" y="1" width="4" height="3" fill="#eee"/><rect x="2" y="5" width="4" height="4" fill="#222"/></svg>
<svg class="a" style="left:541px;top:99px" width="10" height="10" viewBox="0 0 10 10"><path d="M1 9V1H9" fill="none" stroke="#eee" stroke-width="2"/><rect x="4" y="4" width="5" height="5" fill="#222"/></svg>
<div class="t" style="left:474px;top:100px;font-size:4px;line-height:4px;color:#ddd;">▲<br>▼</div>
<div class="t" style="left:520px;top:100px;font-size:4px;line-height:4px;color:#ddd;">▲<br>▼</div>
<div class="t" style="left:560px;top:100px;font-size:4px;line-height:4px;color:#ddd;">▲<br>▼</div>
<!-- radius summary -->
<div class="a fld" style="left:440px;top:119px;width:128px;height:14px;"></div>
<div class="t" style="left:442px;top:122px;font-size:8px;color:#e6e6e6;">90像素90像素90像素90像素</div>
<!-- radius rows -->
<div class="a" style="left:442px;top:139px;width:10px;height:10px;border:1px dotted #aaa;border-top:1px solid #ccc;border-left:1px solid #ccc;border-top-left-radius:3px;"></div>
<div class="a fld" style="left:455px;top:137px;width:47px;height:14px;"></div>
<div class="t" style="left:459px;top:140px;font-size:8px;color:#e6e6e6;">90 像素</div>
<div class="a fld" style="left:505px;top:137px;width:47px;height:14px;"></div>
<div class="t" style="left:509px;top:140px;font-size:8px;color:#e6e6e6;">90 像素</div>
<div class="a" style="left:557px;top:139px;width:10px;height:10px;border:1px dotted #aaa;border-top:1px solid #ccc;border-right:1px solid #ccc;border-top-right-radius:3px;"></div>
<svg class="a" style="left:497px;top:160px" width="13" height="8" viewBox="0 0 12 7"><rect x="0.8" y="1" width="6" height="5" rx="2.5" fill="none" stroke="#d4d4d4" stroke-width="1.4"/><rect x="5.2" y="1" width="6" height="5" rx="2.5" fill="none" stroke="#d4d4d4" stroke-width="1.4"/></svg>
<div class="a" style="left:442px;top:178px;width:10px;height:10px;border:1px dotted #aaa;border-bottom:1px solid #ccc;border-left:1px solid #ccc;border-bottom-left-radius:3px;"></div>
<div class="a fld" style="left:455px;top:176px;width:47px;height:14px;"></div>
<div class="t" style="left:459px;top:179px;font-size:8px;color:#e6e6e6;">90 像素</div>
<div class="a fld" style="left:505px;top:176px;width:47px;height:14px;"></div>
<div class="t" style="left:509px;top:179px;font-size:8px;color:#e6e6e6;">90 像素</div>
<div class="a" style="left:557px;top:178px;width:10px;height:10px;border:1px dotted #aaa;border-bottom:1px solid #ccc;border-right:1px solid #ccc;border-bottom-right-radius:3px;"></div>
<!-- path ops buttons -->
<div class="a" style="left:459px;top:198px;width:22px;height:15px;background:#3c3c3c;border:1px solid #333;border-radius:2px 0 0 2px;"></div>
<div class="a btn" style="left:481px;top:198px;width:23px;height:15px;border-radius:0;"></div>
<div class="a btn" style="left:504px;top:198px;width:23px;height:15px;border-radius:0;"></div>
<div class="a btn" style="left:527px;top:198px;width:22px;height:15px;border-radius:0 2px 2px 0;"></div>
<svg class="a" style="left:465px;top:201px" width="10" height="10" viewBox="0 0 10 10"><rect x="0.5" y="0.5" width="6" height="6" fill="#ddd" stroke="#eee"/><rect x="3.5" y="3.5" width="6" height="6" fill="#ddd" stroke="#eee"/></svg>
<svg class="a" style="left:488px;top:201px" width="10" height="10" viewBox="0 0 10 10"><path d="M0.5 0.5H6.5V3.5H3.5V6.5H0.5Z" fill="#e8e8e8"/><rect x="3.5" y="3.5" width="6" height="6" fill="none" stroke="#aaa" stroke-width="0.8"/></svg>
<svg class="a" style="left:511px;top:201px" width="10" height="10" viewBox="0 0 10 10"><rect x="0.5" y="0.5" width="6" height="6" fill="none" stroke="#ccc" stroke-width="0.8"/><rect x="3.5" y="3.5" width="6" height="6" fill="none" stroke="#ccc" stroke-width="0.8"/><rect x="3.5" y="3.5" width="3" height="3" fill="#eee"/></svg>
<svg class="a" style="left:533px;top:201px" width="10" height="10" viewBox="0 0 10 10"><rect x="0.5" y="0.5" width="6" height="6" fill="#ddd"/><rect x="3.5" y="3.5" width="6" height="6" fill="#ddd"/><rect x="3.5" y="3.5" width="3" height="3" fill="#444"/></svg>
<!-- bottom grip -->
<div class="a" style="left:434px;top:239px;width:176px;height:6px;background:#3f3f3f;border-top:1px solid #5c5c5c;"></div>
<div class="a" style="left:512px;top:242px;width:24px;height:1px;background:#2c2c2c;"></div>
</body>
</html>
